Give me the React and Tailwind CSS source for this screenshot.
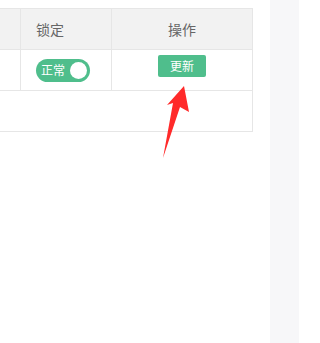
import React from "react";

const font = { fontFamily: '"Noto Sans CJK SC", "Liberation Sans", sans-serif' };

function Toggle({ label }) {
  return (
    <div className="flex items-center w-[54px] h-[23px] rounded-full bg-[#4fbe8c] pl-[5px] pr-[3px] justify-between">
      <span className="text-[12px] leading-none text-white">{label}</span>
      <span className="w-[17px] h-[17px] rounded-full bg-white" />
    </div>
  );
}

export default function App() {
  return (
    <div className="relative flex w-[299px] h-[343px] bg-white" style={font}>
      <div className="flex-1 pt-2">
        <div className="w-[253px] border-t border-r border-[#e6e6e6]">
          {/* header */}
          <div className="flex h-[41px] bg-[#f2f2f2] border-b border-[#e6e6e6] text-[14px] text-[#666]">
            <div className="w-[21px] border-r border-[#e6e6e6]" />
            <div className="w-[91px] border-r border-[#e6e6e6] flex items-center pl-[15px]">锁定</div>
            <div className="flex-1 flex items-center justify-center">操作</div>
          </div>
          {/* row */}
          <div className="flex h-[41px] border-b border-[#e6e6e6]">
            <div className="w-[21px] border-r border-[#e6e6e6]" />
            <div className="w-[91px] border-r border-[#e6e6e6] flex items-center pl-[15px]">
              <Toggle label="正常" />
            </div>
            <div className="flex-1 flex justify-center pt-[5px]">
              <button className="w-[48px] h-[22px] rounded-[2px] bg-[#4fbe8c] text-white text-[12px] leading-none">
                更新
              </button>
            </div>
          </div>
          {/* empty footer row */}
          <div className="h-[41px] border-b border-[#e6e6e6]" />
        </div>
      </div>
      <div className="w-[29px] bg-[#f7f7f9]" />

      {/* annotation arrow */}
      <svg className="absolute left-0 top-0" width="299" height="343" viewBox="0 0 299 343">
        <polygon
          points="184,86 189,112 180,107 163,158 173,103 167,105"
          fill="#ff2a2a"
        />
      </svg>
    </div>
  );
}
